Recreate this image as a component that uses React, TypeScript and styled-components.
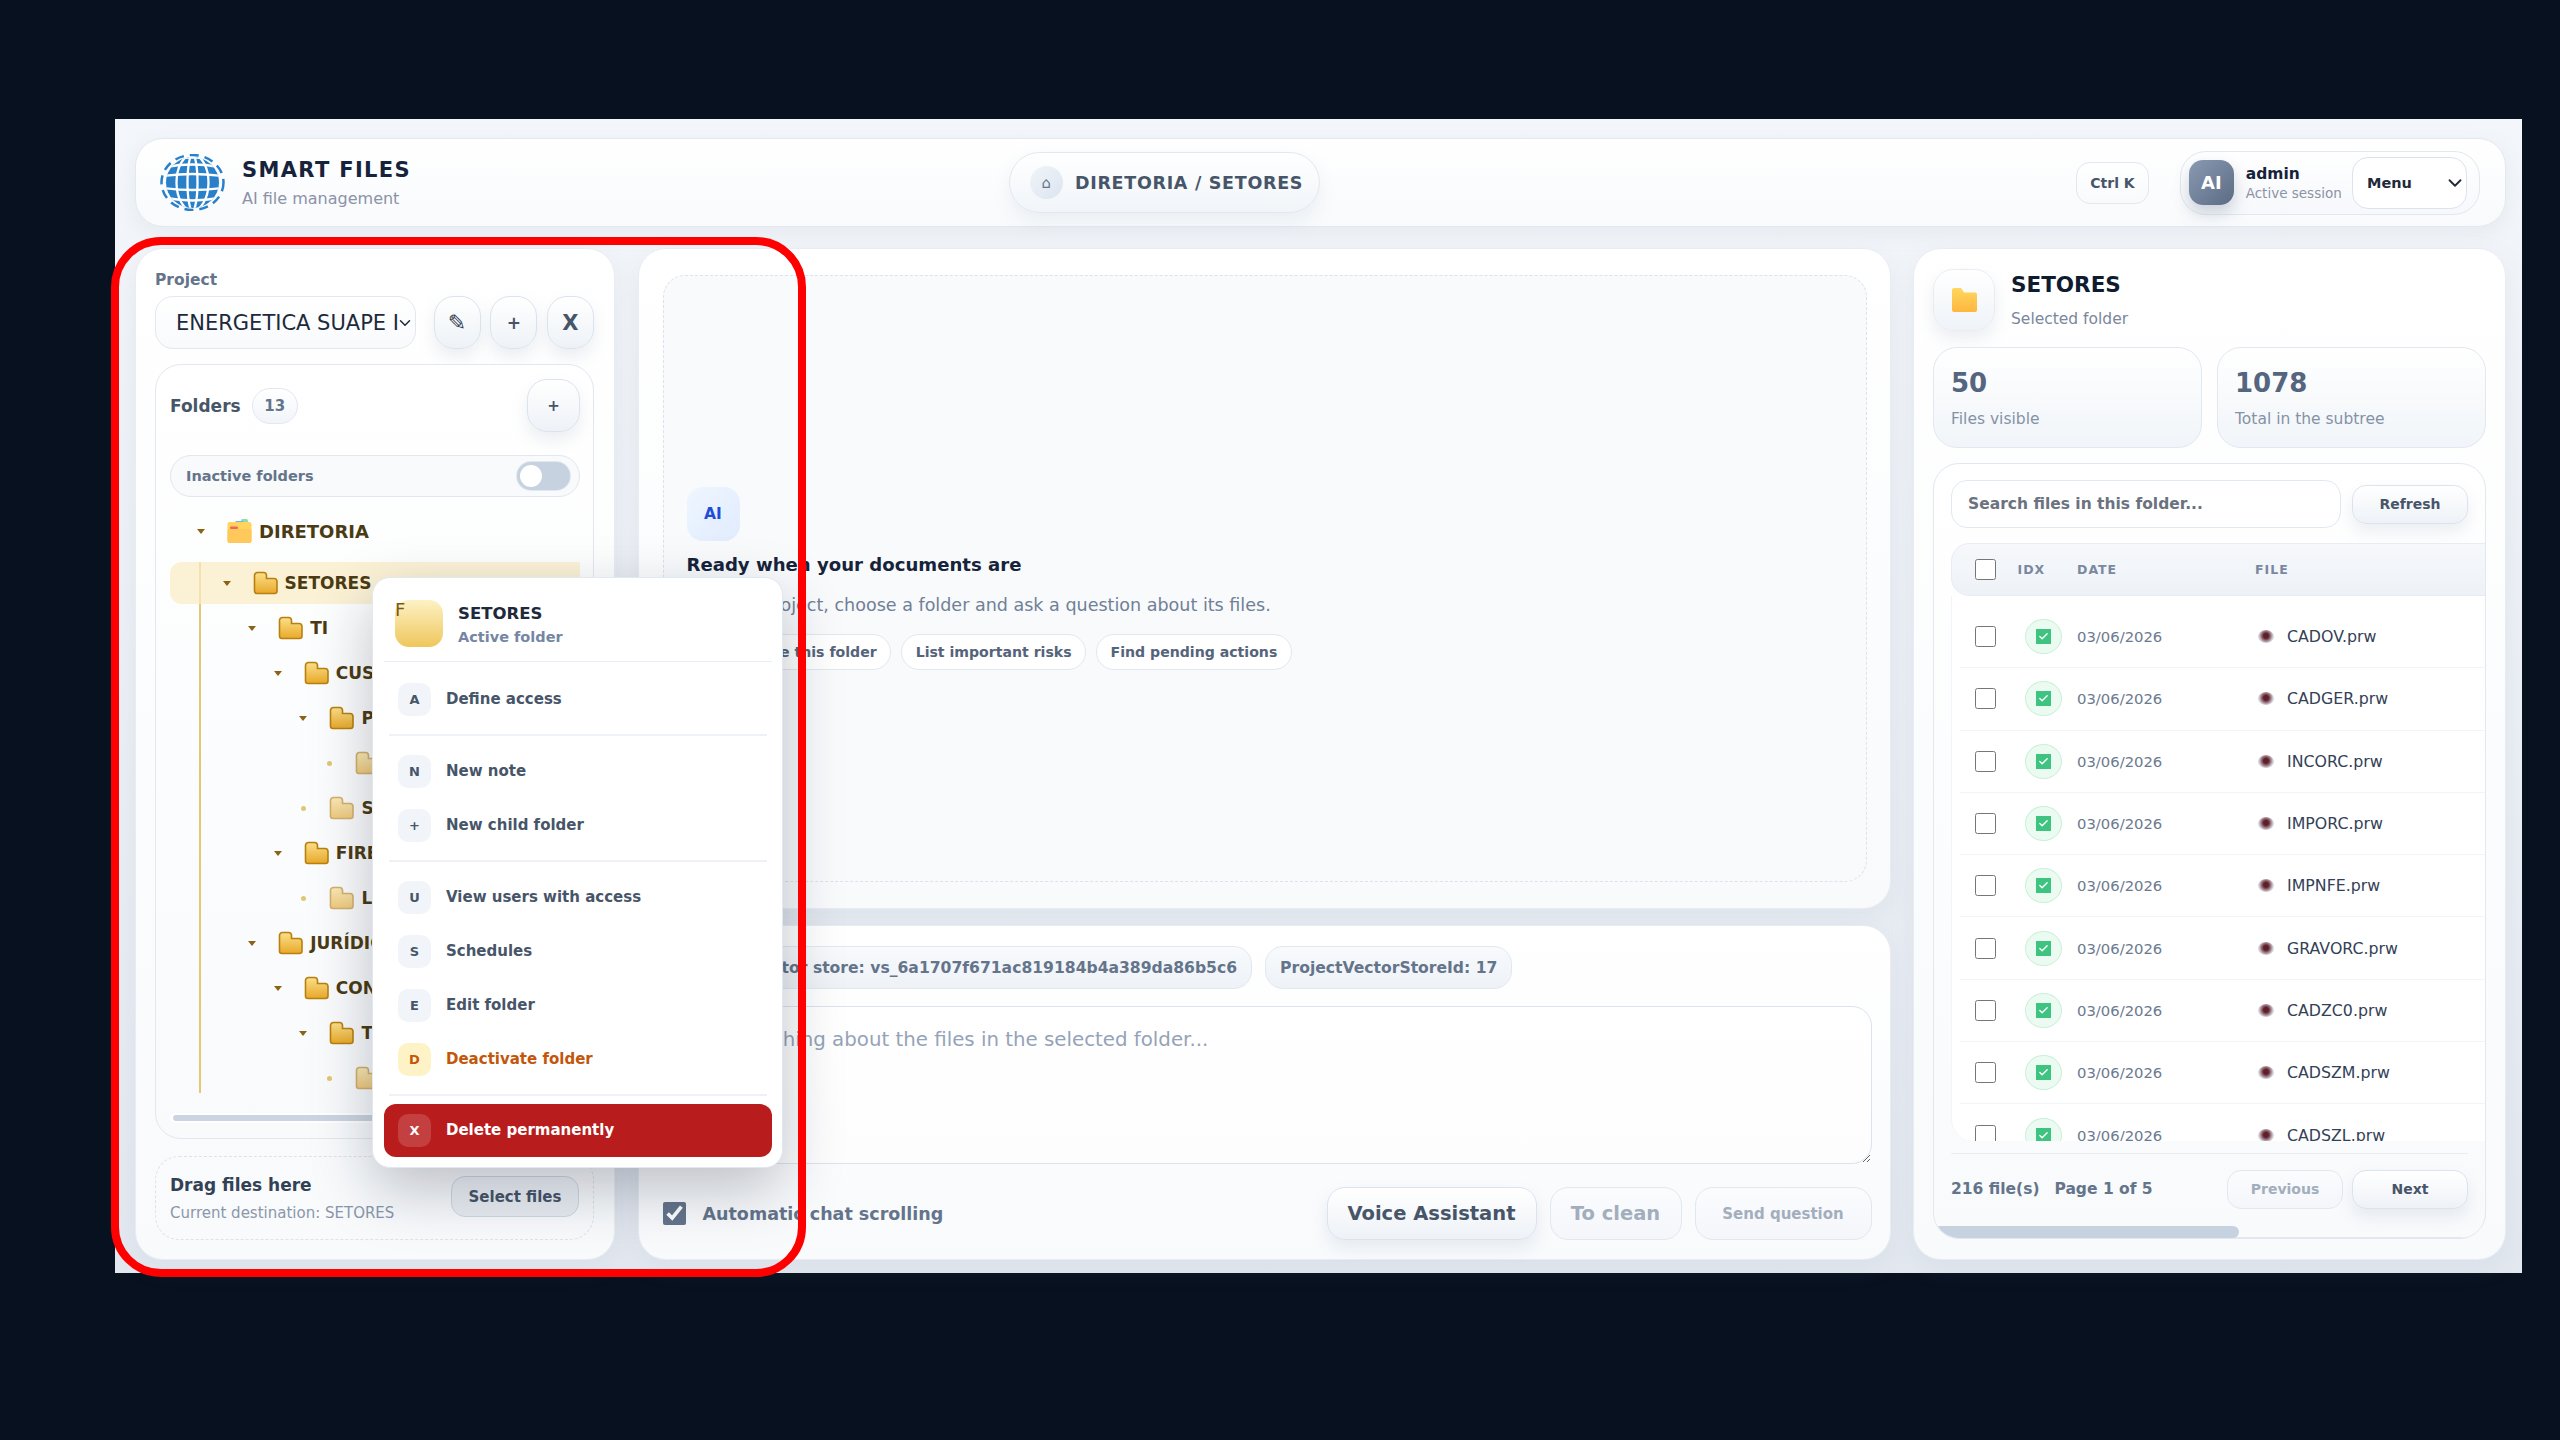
import React from 'react';
import styled, { createGlobalStyle, css } from 'styled-components';
import { Check, ChevronDown } from 'lucide-react';

const GlobalStyle = createGlobalStyle`
  html, body {
    margin: 0;
    background: #07111f;
  }
  body {
    font-family: "DejaVu Sans", Verdana, sans-serif;
  }
  * {
    box-sizing: border-box;
  }
`;

const Page = styled.div`
  width: 2560px;
  height: 1440px;
  padding: 119px 0 0 115px;
  background: #07111f;
  overflow: hidden;
`;

const Shell = styled.div`
  position: relative;
  width: 2407px;
  height: 1154px;
  padding: 19px 16px 13px 20px;
  display: flex;
  flex-direction: column;
  gap: 21px;
  background: linear-gradient(180deg, #f3f6fa, #e3e8f0);
`;

const softButton = css`
  display: flex;
  align-items: center;
  justify-content: center;
  border: 1px solid #dbe3ee;
  background: linear-gradient(180deg, #ffffff, #eef2f7);
  box-shadow: 0 8px 16px rgba(148, 163, 184, 0.18);
  font-family: inherit;
  font-weight: 700;
  color: #475569;
`;

/* top bar */
const TopBar = styled.header`
  height: 89px;
  flex: none;
  display: flex;
  align-items: center;
  padding: 0 25px 0 24px;
  border: 1px solid #e2e8f0;
  border-radius: 28px;
  background: linear-gradient(180deg, #ffffff, #f8fafc);
  box-shadow: 0 6px 20px rgba(148, 163, 184, 0.12);
`;

const Brand = styled.div`
  width: 849px;
  display: flex;
  align-items: center;
  gap: 17px;
`;

const BrandName = styled.div`
  font-size: 21px;
  line-height: 28px;
  font-weight: 700;
  letter-spacing: 1.35px;
  color: #16233a;
`;

const BrandSub = styled.div`
  margin-top: 4px;
  font-size: 16px;
  line-height: 22px;
  color: #8b93a7;
`;

const Crumb = styled.div`
  width: 311px;
  height: 61px;
  display: flex;
  align-items: center;
  gap: 12px;
  padding-left: 20px;
  border: 1px solid #e2e8f0;
  border-radius: 31px;
  background: linear-gradient(180deg, #ffffff, #f1f5f9);
  box-shadow: 0 8px 18px rgba(148, 163, 184, 0.14);
  font-size: 17.5px;
  font-weight: 700;
  letter-spacing: 0.7px;
  color: #475569;
`;

const CrumbIcon = styled.span`
  width: 33px;
  height: 33px;
  display: flex;
  align-items: center;
  justify-content: center;
  border-radius: 50%;
  background: linear-gradient(135deg, #f1f5f9, #dbe4ef);
  font-size: 15px;
  font-weight: 400;
  color: #64748b;
`;

const ShortcutKey = styled.div`
  margin-left: auto;
  width: 73px;
  height: 42px;
  display: flex;
  align-items: center;
  justify-content: center;
  border: 1px solid #e2e8f0;
  border-radius: 14px;
  background: linear-gradient(180deg, #ffffff, #f8fafc);
  font-size: 14px;
  font-weight: 700;
  color: #475569;
`;

const UserPill = styled.div`
  margin-left: 31px;
  width: 300px;
  height: 64px;
  display: flex;
  align-items: center;
  padding: 0 12px 0 8px;
  border: 1px solid #e2e8f0;
  border-radius: 26px;
  background: linear-gradient(180deg, #ffffff, #f6f8fb);
`;

const Avatar = styled.div`
  width: 45px;
  height: 45px;
  display: flex;
  align-items: center;
  justify-content: center;
  border-radius: 14px;
  background: linear-gradient(135deg, #8a9ab3, #5b6b84);
  box-shadow: 0 8px 16px rgba(100, 116, 139, 0.3);
  font-size: 18px;
  font-weight: 700;
  color: #fff;
`;

const UserInfo = styled.div`
  margin-left: 12px;
  width: 107px;
`;

const UserName = styled.div`
  font-size: 15.5px;
  line-height: 20px;
  font-weight: 700;
  color: #16233a;
`;

const UserRole = styled.div`
  font-size: 13.5px;
  line-height: 18px;
  color: #8b93a7;
`;

const SelectBox = styled.div<{ $width: number }>`
  position: relative;
  flex: none;
  width: ${({ $width }) => $width}px;
`;

const SelectChevron = styled(ChevronDown)<{ $right: number }>`
  position: absolute;
  top: 50%;
  right: ${({ $right }) => $right}px;
  transform: translateY(-50%);
  color: #1e293b;
  pointer-events: none;
`;

const MenuSelect = styled.select`
  display: block;
  width: 100%;
  height: 52px;
  padding-left: 14px;
  appearance: none;
  border: 1px solid #dbe3ee;
  border-radius: 16px;
  background: #fff;
  font-family: inherit;
  font-size: 14.5px;
  font-weight: 700;
  color: #1e293b;
`;

const Columns = styled.div`
  flex: 1;
  min-height: 0;
  display: grid;
  grid-template-columns: 480px 1253px 593px;
  column-gap: 22.5px;
`;

const Panel = styled.section`
  display: flex;
  flex-direction: column;
  min-height: 0;
  border: 1px solid #e8edf4;
  border-radius: 28px;
  background: linear-gradient(180deg, #ffffff, #f8fafc);
  box-shadow: 0 8px 24px rgba(148, 163, 184, 0.12);
`;

/* left column */
const LeftPanel = styled(Panel)`
  padding: 19px 20px 19px 19px;
`;

const FieldLabel = styled.div`
  height: 28px;
  line-height: 24px;
  font-size: 15.5px;
  font-weight: 700;
  color: #64748b;
`;

const ProjectRow = styled.div`
  display: flex;
  gap: 9.5px;
  height: 53px;
  flex: none;
`;

const ProjectSelect = styled.select`
  display: block;
  width: 100%;
  height: 53px;
  padding: 0 16px 0 20px;
  appearance: none;
  border: 1px solid #e2e8f0;
  border-radius: 18px;
  background: linear-gradient(180deg, #ffffff, #f8fafc);
  font-family: inherit;
  font-size: 21px;
  color: #1e293b;
`;

const ProjectBox = styled(SelectBox)`
  margin-right: 8px;
`;

const IconButton = styled.button<{ $big?: boolean }>`
  ${softButton}
  width: 47.5px;
  height: 53px;
  padding: 0;
  border-radius: 20px;
  font-size: ${({ $big }) => ($big ? '21px' : '17px')};
`;

const PencilGlyph = styled.span`
  font-size: 22px;
  color: #334155;
`;

const FoldersCard = styled.div`
  flex: 1;
  min-height: 0;
  margin-top: 15px;
  padding: 14px 13px 15px 14px;
  display: flex;
  flex-direction: column;
  border: 1px solid #e2e8f0;
  border-radius: 26px;
  background: linear-gradient(180deg, #ffffff, #f8fafc);
`;

const FoldersHead = styled.div`
  height: 53px;
  flex: none;
  display: flex;
  align-items: center;
  font-size: 17px;
  font-weight: 700;
  color: #475569;
`;

const CountBadge = styled.span`
  margin-left: 11px;
  width: 46px;
  height: 36px;
  display: flex;
  align-items: center;
  justify-content: center;
  border: 1px solid #e2e8f0;
  border-radius: 18px;
  background: linear-gradient(180deg, #ffffff, #f1f5f9);
  font-size: 15px;
  color: #64748b;
`;

const AddFolderButton = styled(IconButton)`
  margin-left: auto;
  width: 53px;
  font-size: 15px;
`;

const InactiveRow = styled.div`
  height: 42px;
  flex: none;
  margin-top: 23px;
  padding: 0 9px 0 15px;
  display: flex;
  align-items: center;
  justify-content: space-between;
  border: 1px solid #e2e8f0;
  border-radius: 21px;
  background: #f8fafc;
  font-size: 14.5px;
  font-weight: 700;
  color: #64748b;
`;

const Toggle = styled.span`
  width: 53px;
  height: 28px;
  padding: 3px;
  border-radius: 14px;
  background: #c7d2e0;
  box-shadow: 0 0 0 1px #e2e8f0;
`;

const ToggleKnob = styled.span`
  display: block;
  width: 22px;
  height: 22px;
  border-radius: 50%;
  background: #fff;
`;

const Tree = styled.div`
  flex: 1;
  min-height: 0;
  margin-top: 13px;
  overflow: hidden;
`;

const TreeBranch = styled.div`
  height: 531px;
  margin: 10px 0 0 29px;
  border-left: 2px solid #e6c778;
`;

const TreeRow = styled.div<{ $depth: number; $selected?: boolean; $nested?: boolean }>`
  height: 42px;
  margin-bottom: 3px;
  margin-left: ${({ $nested }) => ($nested ? '-31px' : '0')};
  padding-left: ${({ $depth }) => 26 + $depth * 25.6}px;
  display: flex;
  align-items: center;
  border-radius: 12px 0 0 12px;
  background: ${({ $selected }) => ($selected ? 'rgba(250, 236, 195, 0.7)' : 'transparent')};
  font-size: 17px;
  font-weight: 700;
  color: #4b3b14;
  white-space: nowrap;
`;

const Caret = styled.span`
  width: 10px;
  margin-right: 21px;
  display: flex;
  justify-content: center;
  &::before {
    content: '';
    border-left: 4px solid transparent;
    border-right: 4px solid transparent;
    border-top: 5px solid #8a6414;
  }
`;

const LeafDot = styled.span`
  width: 10px;
  margin-right: 21px;
  display: flex;
  justify-content: center;
  &::before {
    content: '';
    width: 5px;
    height: 5px;
    border-radius: 50%;
    background: #e3c672;
  }
`;

const RootName = styled.span`
  font-size: 18px;
`;

const FolderGlyph = styled.svg<{ $leaf?: boolean }>`
  flex: none;
  width: 25px;
  height: 24px;
  margin-right: 7px;
  opacity: ${({ $leaf }) => ($leaf ? 0.6 : 1)};
`;

const TreeScroll = styled.div`
  height: 10px;
  flex: none;
  padding: 2px 3px;
  border-radius: 5px;
  background: #fff;
`;

const TreeThumb = styled.div`
  width: 300px;
  height: 6px;
  border-radius: 3px;
  background: #cbd5e1;
`;

const DropZone = styled.div`
  height: 84px;
  flex: none;
  margin-top: 17px;
  padding: 0 14px;
  display: flex;
  align-items: center;
  justify-content: space-between;
  border: 1px dashed #dbe3ee;
  border-radius: 24px;
`;

const DropTitle = styled.div`
  font-size: 17px;
  line-height: 24px;
  font-weight: 700;
  color: #334155;
`;

const DropSub = styled.div`
  margin-top: 6px;
  font-size: 15px;
  line-height: 20px;
  color: #8a97ab;
`;

const SelectFiles = styled.button`
  ${softButton}
  width: 128px;
  height: 41px;
  margin-top: -3px;
  border-radius: 14px;
  border-color: #cfd8e5;
  font-size: 15px;
  box-shadow: none;
  background: linear-gradient(180deg, #f1f5f9, #e7ebf2);
`;

/* centre column */
const CenterColumn = styled.div`
  display: flex;
  flex-direction: column;
  gap: 16px;
  min-height: 0;
`;

const ChatPanel = styled(Panel)`
  flex: 1;
  padding: 26px 23px 26px 24px;
`;

const EmptyState = styled.div`
  flex: 1;
  padding: 0 23px;
  display: flex;
  flex-direction: column;
  justify-content: center;
  align-items: flex-start;
  border: 1px dashed #dbe3ee;
  border-radius: 22px;
  background: #f8fafc;
`;

const AiBadge = styled.div`
  width: 53px;
  height: 54px;
  display: flex;
  align-items: center;
  justify-content: center;
  border-radius: 16px;
  background: linear-gradient(135deg, #eff6ff, #e0ebfd);
  font-size: 15.5px;
  font-weight: 700;
  color: #1d4ed8;
`;

const ReadyTitle = styled.h2`
  margin: 12px 0 0;
  font-size: 18.1px;
  line-height: 24px;
  font-weight: 700;
  color: #16233a;
`;

const ReadySub = styled.p`
  margin: 16px 0 0;
  font-size: 17.55px;
  line-height: 24px;
  color: #718096;
`;

const Suggestions = styled.div`
  margin-top: 17px;
  display: flex;
  gap: 10px;
`;

const Suggestion = styled.span`
  height: 36px;
  padding: 0 13.5px;
  display: flex;
  align-items: center;
  border: 1px solid #e2e8f0;
  border-radius: 18px;
  background: #fff;
  font-size: 14.1px;
  font-weight: 700;
  color: #55647a;
`;

const ComposerPanel = styled(Panel)`
  height: 335px;
  flex: none;
  padding: 20px 18px 20px 24px;
`;

const InfoChips = styled.div`
  height: 43px;
  flex: none;
  display: flex;
  gap: 13px;
`;

const InfoChip = styled.span`
  padding: 0 14px;
  display: flex;
  align-items: center;
  border: 1px solid #e2e8f0;
  border-radius: 18px;
  background: linear-gradient(180deg, #f8fafc, #eef2f7);
  font-size: 15.6px;
  font-weight: 700;
  color: #64748b;
`;

const Question = styled.textarea`
  display: block;
  flex: none;
  width: 100%;
  height: 158px;
  margin-top: 17px;
  padding: 20px 16px;
  border: 1px solid #dbe3ee;
  border-radius: 20px;
  background: linear-gradient(180deg, #ffffff, #fdfdfe);
  font-family: inherit;
  font-size: 19.8px;
  line-height: 26px;
  &::placeholder {
    color: #94a3b8;
  }
`;

const ComposerActions = styled.div`
  height: 53px;
  flex: none;
  margin-top: 23px;
  display: flex;
  align-items: center;
  gap: 13px;
`;

const AutoScroll = styled.label`
  margin-right: auto;
  display: flex;
  align-items: center;
  gap: 17px;
  font-size: 17.5px;
  font-weight: 700;
  color: #64748b;
`;

const AutoScrollBox = styled.input`
  width: 23px;
  height: 23px;
  margin: 0;
  accent-color: #64748b;
`;

const ActionButton = styled.button<{ $width: number; $dim?: boolean; $small?: boolean }>`
  ${softButton}
  width: ${({ $width }) => $width}px;
  height: 53px;
  padding: 0;
  border-radius: 18px;
  font-size: ${({ $small }) => ($small ? '15px' : '19.5px')};
  ${({ $dim }) =>
    $dim &&
    css`
      border-color: #e2e8f0;
      background: linear-gradient(180deg, #fbfcfe, #f4f6fa);
      box-shadow: none;
      color: #a3aebd;
    `}
`;

/* right column */
const RightPanel = styled(Panel)`
  padding: 20px 19px 20px 19px;
`;

const FolderHead = styled.div`
  height: 62px;
  flex: none;
  display: flex;
  align-items: center;
  gap: 16px;
`;

const FolderTile = styled.div`
  width: 62px;
  height: 62px;
  display: flex;
  align-items: center;
  justify-content: center;
  border: 1px solid #e8edf4;
  border-radius: 20px;
  background: linear-gradient(180deg, #ffffff, #eff3f8);
  box-shadow: 0 8px 16px rgba(148, 163, 184, 0.18);
`;

const FolderTitle = styled.div`
  font-size: 21.5px;
  line-height: 28px;
  font-weight: 700;
  color: #0f1c30;
`;

const FolderSub = styled.div`
  margin-top: 10px;
  font-size: 15.5px;
  line-height: 20px;
  color: #7b879c;
`;

const Stats = styled.div`
  height: 101px;
  flex: none;
  margin-top: 16px;
  display: grid;
  grid-template-columns: 269px 269px;
  column-gap: 15px;
`;

const StatCard = styled.div`
  padding: 16px 17px 0;
  border: 1px solid #e2e8f0;
  border-radius: 24px;
  background: linear-gradient(180deg, #ffffff, #f1f5f9);
`;

const StatValue = styled.div`
  font-size: 26px;
  line-height: 38px;
  font-weight: 700;
  color: #55657e;
`;

const StatLabel = styled.div`
  margin-top: 6px;
  font-size: 15.5px;
  line-height: 22px;
  color: #8592a6;
`;

const FilesCard = styled.div`
  flex: 1;
  min-height: 0;
  margin-top: 15px;
  padding: 16px 17px 0;
  display: flex;
  flex-direction: column;
  overflow: hidden;
  border: 1px solid #e2e8f0;
  border-radius: 26px;
  background: linear-gradient(180deg, #ffffff, #f8fafc);
`;

const SearchRow = styled.div`
  height: 48px;
  flex: none;
  display: flex;
  align-items: center;
  justify-content: space-between;
`;

const SearchInput = styled.input`
  width: 390px;
  height: 48px;
  padding: 0 16px;
  border: 1px solid #e2e8f0;
  border-radius: 16px;
  background: #fff;
  font-family: inherit;
  font-size: 15.5px;
  font-weight: 700;
  &::placeholder {
    color: #6b7280;
  }
`;

const SmallButton = styled.button<{ $dim?: boolean }>`
  ${softButton}
  width: 116px;
  height: 39px;
  flex: none;
  padding: 0;
  border-radius: 14px;
  font-size: 14px;
  ${({ $dim }) =>
    $dim &&
    css`
      background: linear-gradient(180deg, #fbfcfe, #f4f6fa);
      box-shadow: none;
      border-color: #e2e8f0;
      color: #a3aebd;
    `}
`;

const tableColumns = css`
  display: grid;
  grid-template-columns: 42.5px 59.5px 178px 1fr;
  align-items: center;
`;

const TableHead = styled.div`
  ${tableColumns}
  width: 760px;
  height: 53.5px;
  flex: none;
  margin-top: 14.5px;
  padding-left: 23px;
  border: 1px solid #e8edf4;
  border-radius: 18px 0 0 18px;
  background: linear-gradient(180deg, #f6f8fb, #eef2f7);
  font-size: 12.5px;
  font-weight: 700;
  letter-spacing: 1px;
  color: #7a88a0;
`;

const RowList = styled.div`
  flex: 1;
  min-height: 0;
  width: 760px;
  padding: 10px 0 0 8px;
  overflow: hidden;
  border-left: 1px solid #f1f5f9;
  border-radius: 0 0 0 22px;
  background: #fff;
`;

const FileRow = styled.div`
  ${tableColumns}
  height: 62.3px;
  padding-left: 15px;
  border-bottom: 1px solid #f1f5f9;
`;

const RowCheck = styled.input`
  width: 21px;
  height: 21px;
  margin: 0;
`;

const StatusOval = styled.span`
  width: 37px;
  height: 35px;
  margin-left: 7px;
  display: flex;
  align-items: center;
  justify-content: center;
  border: 1px solid #c9f0d8;
  border-radius: 50%;
  background: #ecfbf2;
`;

const StatusBox = styled.span`
  width: 15px;
  height: 15px;
  display: flex;
  align-items: center;
  justify-content: center;
  background: #3fc380;
  color: #fff;
`;

const RowDate = styled.span`
  font-size: 14.8px;
  color: #6b7a90;
`;

const RowFile = styled.span`
  display: flex;
  align-items: center;
  gap: 13px;
  padding-left: 3px;
  font-size: 15.8px;
  color: #334155;
`;

const FileDot = styled.span`
  width: 16px;
  height: 13px;
  border-radius: 50%;
  background: radial-gradient(circle at 50% 45%, #5d1f28 0 22%, #8a5a66 38%, #c9c6cf 62%, #efeef2 85%, transparent 100%);
`;

const ListFooter = styled.div`
  height: 56px;
  flex: none;
  margin-top: 12px;
  padding-top: 15px;
  display: flex;
  align-items: center;
  gap: 9px;
  border-top: 1px solid #e8edf4;
  font-size: 15.5px;
  font-weight: 700;
  color: #64748b;
`;

const PageInfo = styled.span`
  margin: 0 auto 0 6px;
`;

const HScroll = styled.div`
  height: 12px;
  flex: none;
  margin: 17px -17px 0;
  border-bottom: 1px solid #e2e8f0;
`;

const HThumb = styled.div`
  width: 305px;
  height: 12px;
  border-radius: 6px;
  background: #c7d2e0;
`;

/* overlays */
const FolderMenu = styled.div`
  position: absolute;
  left: 257px;
  top: 458px;
  width: 411px;
  height: 591px;
  padding: 22px 10px 11px 11px;
  display: flex;
  flex-direction: column;
  border: 1px solid #e2e8f0;
  border-radius: 18px;
  background: #fff;
  box-shadow: 0 22px 60px rgba(15, 23, 42, 0.26);
`;

const MenuHead = styled.div`
  height: 62px;
  flex: none;
  margin-bottom: 10px;
  padding: 0 0 15px 11px;
  display: flex;
  align-items: flex-start;
  gap: 15px;
  border-bottom: 1px solid #e8eef5;
`;

const MenuHeadIcon = styled.div`
  width: 48px;
  height: 47px;
  border-radius: 14px;
  background: linear-gradient(180deg, #fdf2c4, #efc65c);
  font-size: 18px;
  line-height: 20px;
  color: #7a5a13;
`;

const MenuHeadTitle = styled.div`
  margin-top: 3px;
  font-size: 16.5px;
  line-height: 22px;
  font-weight: 700;
  color: #1e293b;
`;

const MenuHeadSub = styled.div`
  margin-top: 1px;
  font-size: 14.5px;
  line-height: 22px;
  font-weight: 700;
  color: #7486a3;
`;

const MenuItem = styled.div<{ $tone?: 'warn' | 'danger' }>`
  height: 54px;
  flex: none;
  padding-left: 14px;
  display: flex;
  align-items: center;
  gap: 15px;
  font-size: 15px;
  font-weight: 700;
  color: #475569;
  ${({ $tone }) => $tone === 'warn' && 'color: #c2570c;'}
  ${({ $tone }) =>
    $tone === 'danger' &&
    css`
      height: 52.5px;
      border-radius: 12px;
      background: #b91c1c;
      color: #fff;
    `}
`;

const MenuItemIcon = styled.span<{ $tone?: 'warn' | 'danger' }>`
  width: 33px;
  height: 33px;
  display: flex;
  align-items: center;
  justify-content: center;
  border-radius: 10px;
  background: ${({ $tone }) =>
    $tone === 'warn' ? '#fef3c7' : $tone === 'danger' ? 'rgba(255, 255, 255, 0.16)' : '#f1f5f9'};
  font-size: 13px;
`;

const MenuSplit = styled.div`
  height: 2px;
  flex: none;
  margin: 8px 5px;
  background: #eef2f7;
`;

const Annotation = styled.div`
  position: absolute;
  left: -4px;
  top: 118px;
  width: 695px;
  height: 1040px;
  border: 8px solid #ff0000;
  border-radius: 50px;
  pointer-events: none;
`;

const GlobeLogo = () => (
  <svg width="65" height="57" viewBox="0 0 65 57">
    <defs>
      <clipPath id="globe-core">
        <ellipse cx="32.5" cy="28.5" rx="26.5" ry="25.5" />
      </clipPath>
    </defs>
    <ellipse cx="32.5" cy="28.5" rx="31" ry="27.5" fill="none" stroke="#2a80c8" strokeWidth="2.5" strokeDasharray="9 6" />
    <ellipse cx="32.5" cy="28.5" rx="26.5" ry="25.5" fill="#2a80c8" />
    <g clipPath="url(#globe-core)" fill="none" stroke="#fff" strokeWidth="2.3">
      <ellipse cx="32.5" cy="28.5" rx="5" ry="28" />
      <ellipse cx="32.5" cy="28.5" rx="16" ry="28" />
      <path d="M3 22q29.500-4 59 0" />
      <path d="M3 34q29.500 4 59 0" />
      <path d="M6 13q26.500-5 53 0" />
      <path d="M6 44q26.500 5 53 0" />
      <path d="M10 5q22.500-3 45 0" />
    </g>
  </svg>
);

const TreeFolder = ({ leaf }: { leaf?: boolean }) => (
  <FolderGlyph $leaf={leaf} viewBox="0 0 25 24">
    <defs>
      <linearGradient id="tree-folder" x1="0" y1="0" x2="0" y2="1">
        <stop offset="0" stopColor="#fbe08a" />
        <stop offset="1" stopColor="#e9a92a" />
      </linearGradient>
    </defs>
    <path
      d="M1.500 20V4.500a3 3 0 0 1 3-3h6a3 3 0 0 1 3 3v3h7.500a3 3 0 0 1 3 3V20a2.500 2.500 0 0 1-2.500 2.500H4A2.500 2.500 0 0 1 1.500 20z"
      fill="url(#tree-folder)"
      stroke="#b9800f"
      strokeWidth="1.6"
    />
  </FolderGlyph>
);

const RootFolder = () => (
  <FolderGlyph viewBox="0 0 25 24">
    <rect x="14" y="0" width="7" height="4" rx="1.500" fill="#8fdcae" />
    <rect x="8" y="2" width="9" height="3.500" rx="1.500" fill="#6cb2e8" />
    <rect x="0.500" y="3" width="24" height="21" rx="2.500" fill="#ffd35c" />
    <rect x="3" y="7.500" width="8" height="2.500" rx="1" fill="#f0685c" />
    <rect x="0.500" y="10" width="24" height="14" rx="2" fill="#ffc85a" />
  </FolderGlyph>
);

const SelectedFolderIcon = () => (
  <svg width="25" height="24" viewBox="0 0 25 24">
    <defs>
      <linearGradient id="tile-folder" x1="0" y1="0" x2="0" y2="1">
        <stop offset="0" stopColor="#ffd75e" />
        <stop offset="1" stopColor="#ffb63f" />
      </linearGradient>
    </defs>
    <path
      d="M0 2a2 2 0 0 1 2-2h7l3 4.500h11a2 2 0 0 1 2 2V22a2 2 0 0 1-2 2H2a2 2 0 0 1-2-2z"
      fill="url(#tile-folder)"
    />
  </svg>
);

interface TreeNode {
  name: string;
  depth: number;
  leaf?: boolean;
  selected?: boolean;
}

const treeNodes: TreeNode[] = [
  { name: 'SETORES', depth: 1, selected: true },
  { name: 'TI', depth: 2 },
  { name: 'CUSTOS', depth: 3 },
  { name: 'PROJETOS', depth: 4 },
  { name: 'ARQUIVOS', depth: 5, leaf: true },
  { name: 'SISTEMAS', depth: 4, leaf: true },
  { name: 'FIRE', depth: 3 },
  { name: 'LOGS', depth: 4, leaf: true },
  { name: 'JURÍDICO', depth: 2 },
  { name: 'CONTRATOS', depth: 3 },
  { name: 'TERMOS', depth: 4 },
  { name: 'ATIVOS', depth: 5, leaf: true },
];

const fileNames = [
  'CADOV.prw',
  'CADGER.prw',
  'INCORC.prw',
  'IMPORC.prw',
  'IMPNFE.prw',
  'GRAVORC.prw',
  'CADZC0.prw',
  'CADSZM.prw',
  'CADSZL.prw',
];

const App = () => {
  return (
    <Page>
      <GlobalStyle />
      <Shell>
        <TopBar>
          <Brand>
            <GlobeLogo />
            <div>
              <BrandName>SMART FILES</BrandName>
              <BrandSub>AI file management</BrandSub>
            </div>
          </Brand>
          <Crumb>
            <CrumbIcon>⌂</CrumbIcon>
            DIRETORIA / SETORES
          </Crumb>
          <ShortcutKey>Ctrl K</ShortcutKey>
          <UserPill>
            <Avatar>AI</Avatar>
            <UserInfo>
              <UserName>admin</UserName>
              <UserRole>Active session</UserRole>
            </UserInfo>
            <SelectBox $width={115}>
              <MenuSelect defaultValue="menu">
                <option value="menu">Menu</option>
              </MenuSelect>
              <SelectChevron $right={1} size={22} strokeWidth={2} />
            </SelectBox>
          </UserPill>
        </TopBar>

        <Columns>
          <LeftPanel>
            <FieldLabel>Project</FieldLabel>
            <ProjectRow>
              <ProjectBox $width={261}>
                <ProjectSelect defaultValue="suape">
                  <option value="suape">ENERGETICA SUAPE IMPORTACAO</option>
                </ProjectSelect>
                <SelectChevron $right={2} size={18} strokeWidth={2} />
              </ProjectBox>
              <IconButton>
                <PencilGlyph>✎</PencilGlyph>
              </IconButton>
              <IconButton>+</IconButton>
              <IconButton $big>X</IconButton>
            </ProjectRow>
            <FoldersCard>
              <FoldersHead>
                Folders
                <CountBadge>13</CountBadge>
                <AddFolderButton>+</AddFolderButton>
              </FoldersHead>
              <InactiveRow>
                Inactive folders
                <Toggle>
                  <ToggleKnob />
                </Toggle>
              </InactiveRow>
              <Tree>
                <TreeRow $depth={0}>
                  <Caret />
                  <RootFolder />
                  <RootName>DIRETORIA</RootName>
                </TreeRow>
                <TreeBranch>
                  {treeNodes.map((node) => (
                    <TreeRow key={node.name} $depth={node.depth} $selected={node.selected} $nested>
                      {node.leaf ? <LeafDot /> : <Caret />}
                      <TreeFolder leaf={node.leaf} />
                      {node.name}
                    </TreeRow>
                  ))}
                </TreeBranch>
              </Tree>
              <TreeScroll>
                <TreeThumb />
              </TreeScroll>
            </FoldersCard>
            <DropZone>
              <div>
                <DropTitle>Drag files here</DropTitle>
                <DropSub>Current destination: SETORES</DropSub>
              </div>
              <SelectFiles>Select files</SelectFiles>
            </DropZone>
          </LeftPanel>

          <CenterColumn>
            <ChatPanel>
              <EmptyState>
                <AiBadge>AI</AiBadge>
                <ReadyTitle>Ready when your documents are</ReadyTitle>
                <ReadySub>Select a project, choose a folder and ask a question about its files.</ReadySub>
                <Suggestions>
                  <Suggestion>Summarize this folder</Suggestion>
                  <Suggestion>List important risks</Suggestion>
                  <Suggestion>Find pending actions</Suggestion>
                </Suggestions>
              </EmptyState>
            </ChatPanel>
            <ComposerPanel>
              <InfoChips>
                <InfoChip>Bot</InfoChip>
                <InfoChip>Vector store: vs_6a1707f671ac819184b4a389da86b5c6</InfoChip>
                <InfoChip>ProjectVectorStoreId: 17</InfoChip>
              </InfoChips>
              <Question placeholder="Ask something about the files in the selected folder..." />
              <ComposerActions>
                <AutoScroll>
                  <AutoScrollBox type="checkbox" defaultChecked />
                  Automatic chat scrolling
                </AutoScroll>
                <ActionButton $width={210}>Voice Assistant</ActionButton>
                <ActionButton $width={132} $dim>
                  To clean
                </ActionButton>
                <ActionButton $width={177} $dim $small>
                  Send question
                </ActionButton>
              </ComposerActions>
            </ComposerPanel>
          </CenterColumn>

          <RightPanel>
            <FolderHead>
              <FolderTile>
                <SelectedFolderIcon />
              </FolderTile>
              <div>
                <FolderTitle>SETORES</FolderTitle>
                <FolderSub>Selected folder</FolderSub>
              </div>
            </FolderHead>
            <Stats>
              <StatCard>
                <StatValue>50</StatValue>
                <StatLabel>Files visible</StatLabel>
              </StatCard>
              <StatCard>
                <StatValue>1078</StatValue>
                <StatLabel>Total in the subtree</StatLabel>
              </StatCard>
            </Stats>
            <FilesCard>
              <SearchRow>
                <SearchInput placeholder="Search files in this folder..." />
                <SmallButton>Refresh</SmallButton>
              </SearchRow>
              <TableHead>
                <RowCheck type="checkbox" />
                <span>IDX</span>
                <span>DATE</span>
                <span>FILE</span>
              </TableHead>
              <RowList>
                {fileNames.map((name) => (
                  <FileRow key={name}>
                    <RowCheck type="checkbox" />
                    <StatusOval>
                      <StatusBox>
                        <Check size={11} strokeWidth={3} />
                      </StatusBox>
                    </StatusOval>
                    <RowDate>03/06/2026</RowDate>
                    <RowFile>
                      <FileDot />
                      {name}
                    </RowFile>
                  </FileRow>
                ))}
              </RowList>
              <ListFooter>
                <span>216 file(s)</span>
                <PageInfo>Page 1 of 5</PageInfo>
                <SmallButton $dim>Previous</SmallButton>
                <SmallButton>Next</SmallButton>
              </ListFooter>
              <HScroll>
                <HThumb />
              </HScroll>
            </FilesCard>
          </RightPanel>
        </Columns>

        <FolderMenu>
          <MenuHead>
            <MenuHeadIcon>F</MenuHeadIcon>
            <div>
              <MenuHeadTitle>SETORES</MenuHeadTitle>
              <MenuHeadSub>Active folder</MenuHeadSub>
            </div>
          </MenuHead>
          <MenuItem>
            <MenuItemIcon>A</MenuItemIcon>
            Define access
          </MenuItem>
          <MenuSplit />
          <MenuItem>
            <MenuItemIcon>N</MenuItemIcon>
            New note
          </MenuItem>
          <MenuItem>
            <MenuItemIcon>+</MenuItemIcon>
            New child folder
          </MenuItem>
          <MenuSplit />
          <MenuItem>
            <MenuItemIcon>U</MenuItemIcon>
            View users with access
          </MenuItem>
          <MenuItem>
            <MenuItemIcon>S</MenuItemIcon>
            Schedules
          </MenuItem>
          <MenuItem>
            <MenuItemIcon>E</MenuItemIcon>
            Edit folder
          </MenuItem>
          <MenuItem $tone="warn">
            <MenuItemIcon $tone="warn">D</MenuItemIcon>
            Deactivate folder
          </MenuItem>
          <MenuSplit />
          <MenuItem $tone="danger">
            <MenuItemIcon $tone="danger">X</MenuItemIcon>
            Delete permanently
          </MenuItem>
        </FolderMenu>
        <Annotation />
      </Shell>
    </Page>
  );
};

export default App;
